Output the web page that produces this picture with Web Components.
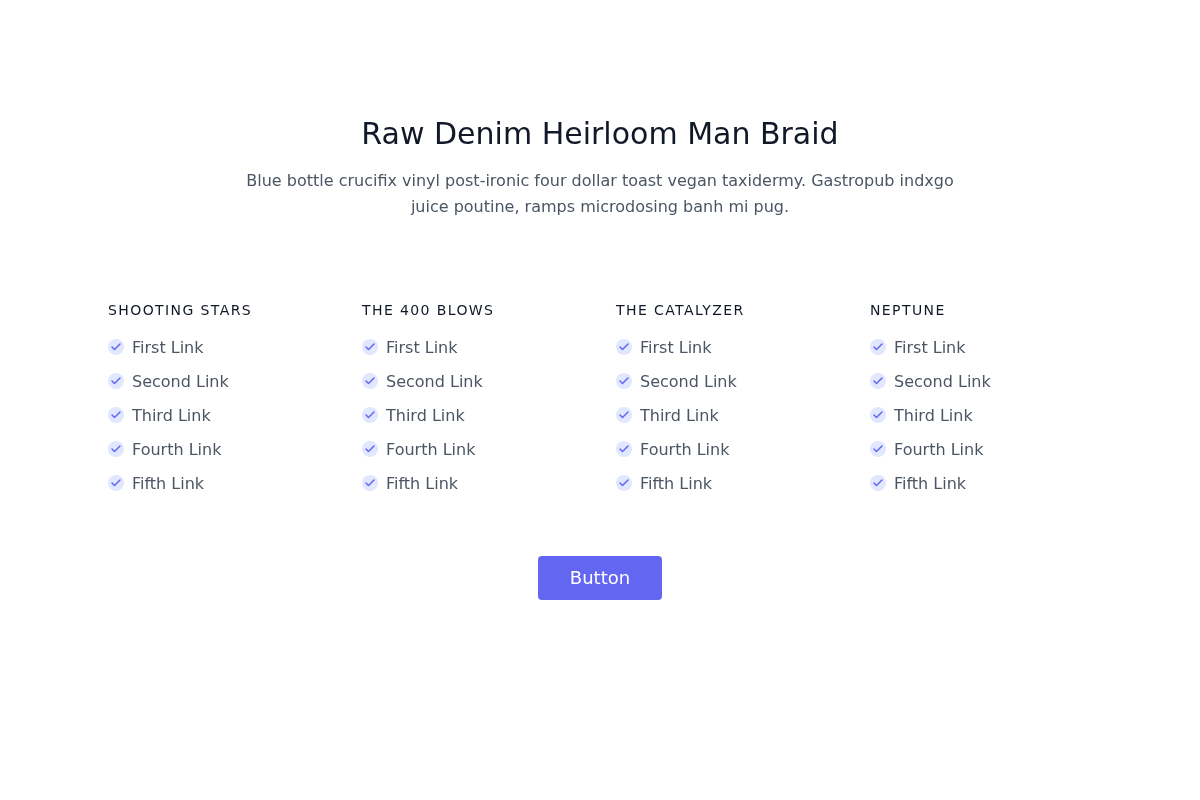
<!DOCTYPE html>
<html>
<head>
<meta charset="utf-8">
<style>
  html, body { margin: 0; background: #fff; }
  body { font-family: "DejaVu Sans", sans-serif; }
</style>
</head>
<body>
<pricing-section>
  <section-header slot="header" title="Raw Denim Heirloom Man Braid">Blue bottle crucifix vinyl post-ironic four dollar toast vegan taxidermy. Gastropub indxgo<br>juice poutine, ramps microdosing banh mi pug.</section-header>
  <link-column title="SHOOTING STARS"></link-column>
  <link-column title="THE 400 BLOWS"></link-column>
  <link-column title="THE CATALYZER"></link-column>
  <link-column title="NEPTUNE"></link-column>
  <primary-button slot="action">Button</primary-button>
</pricing-section>

<script>
class PricingSection extends HTMLElement {
  connectedCallback() {
    this.attachShadow({ mode: 'open' });
    this.shadowRoot.innerHTML = `
      <style>
        :host { display: block; }
        .container { max-width: 1016px; margin: 0 auto; padding: 100px 0 96px; display: flex; flex-direction: column; will-change: transform; }
        .columns { display: grid; grid-template-columns: repeat(4, 1fr); margin-top: 80px; }
        .action { display: flex; justify-content: center; margin-top: 59px; }
      </style>
      <div class="container">
        <slot name="header"></slot>
        <div class="columns"><slot></slot></div>
        <div class="action"><slot name="action"></slot></div>
      </div>
    `;
  }
}

class SectionHeader extends HTMLElement {
  connectedCallback() {
    this.attachShadow({ mode: 'open' });
    this.shadowRoot.innerHTML = `
      <style>
        :host { display: block; text-align: center; }
        h1 { margin: 0 0 16px; font-size: 30px; line-height: 36px; font-weight: 500; color: #111827; padding-top: 16px; }
        p { margin: 0; font-size: 16px; line-height: 26px; color: #4b5563; }
      </style>
      <h1>${this.getAttribute('title')}</h1>
      <p><slot></slot></p>
    `;
  }
}

class LinkColumn extends HTMLElement {
  connectedCallback() {
    const links = ['First Link', 'Second Link', 'Third Link', 'Fourth Link', 'Fifth Link'];
    this.attachShadow({ mode: 'open' });
    this.shadowRoot.innerHTML = `
      <style>
        :host { display: block; padding: 0 16px; }
        h2 { margin: 0 0 15px; font-size: 14px; line-height: 20px; font-weight: 500; letter-spacing: 0.1em; color: #111827; }
        ul { list-style: none; margin: 0; padding: 0; display: flex; flex-direction: column; gap: 8px; }
        li { display: flex; align-items: flex-start; font-size: 16px; line-height: 26px; color: #4b5563; }
        .check { width: 16px; height: 16px; margin: 4px 8px 0 0; border-radius: 50%; background: #e0e7ff; color: #6366f1; display: inline-flex; align-items: center; justify-content: center; }
        svg { width: 12px; height: 12px; }
      </style>
      <h2>${this.getAttribute('title')}</h2>
      <ul>
        ${links.map(l => `<li><span class="check"><svg fill="none" stroke="currentColor" stroke-linecap="round" stroke-linejoin="round" stroke-width="3" viewBox="0 0 24 24"><path d="M20 6L9 17l-5-5"></path></svg></span>${l}</li>`).join('')}
      </ul>
    `;
  }
}

class PrimaryButton extends HTMLElement {
  connectedCallback() {
    this.attachShadow({ mode: 'open' });
    this.shadowRoot.innerHTML = `
      <style>
        :host { display: inline-block; }
        button { display: block; border: 0; border-radius: 4px; background: #6366f1; color: #fff; font: inherit; font-size: 18px; line-height: 28px; padding: 8px 32px; }
      </style>
      <button><slot></slot></button>
    `;
  }
}

customElements.define('pricing-section', PricingSection);
customElements.define('section-header', SectionHeader);
customElements.define('link-column', LinkColumn);
customElements.define('primary-button', PrimaryButton);
</script>
</body>
</html>
